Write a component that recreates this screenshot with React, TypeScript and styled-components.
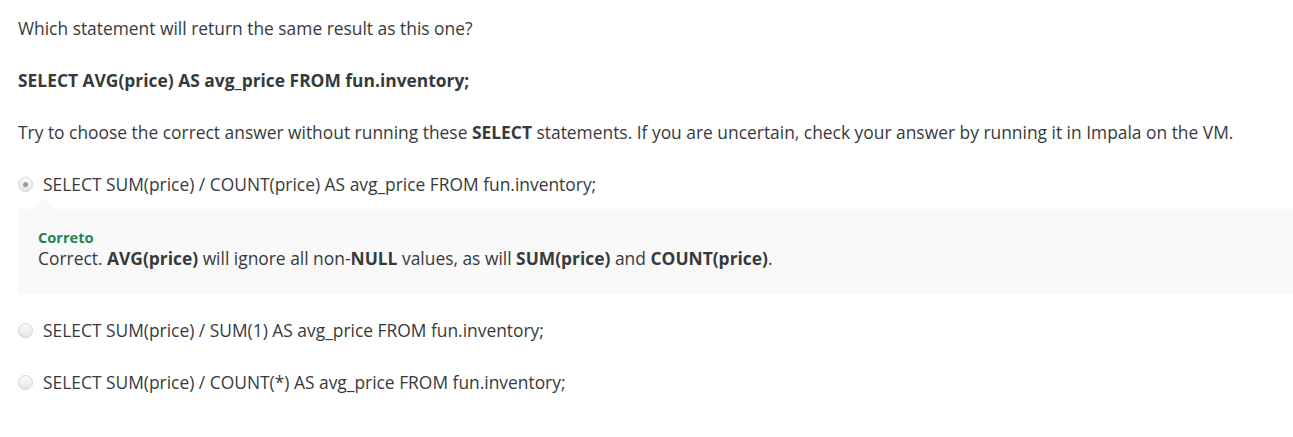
import React from "react";
import styled, { createGlobalStyle } from "styled-components";

const Global = createGlobalStyle`
  html, body { margin: 0; padding: 0; background: #fff; }
  body {
    font-family: "Open Sans", "Liberation Sans", sans-serif;
    font-size: 17.4px;
    line-height: 24px;
    color: #373a3c;
  }
`;

const Page = styled.div`
  padding: 16px 0 0 18px;
`;

const Para = styled.p<{ $bold?: boolean }>`
  margin: 0 0 28px 0;
  font-weight: ${(p) => (p.$bold ? 700 : 400)};
`;

const Options = styled.div`
  display: flex;
  flex-direction: column;
  margin-top: 1px;
`;

const Option = styled.label<{ $gap: number }>`
  display: flex;
  align-items: center;
  gap: 10px;
  height: 24px;
  margin-bottom: ${(p) => p.$gap}px;
`;

const Radio = styled.span<{ $checked?: boolean }>`
  position: relative;
  width: 15px;
  height: 15px;
  border-radius: 50%;
  box-sizing: border-box;
  border: 1px solid #d2d2d2;
  background: linear-gradient(#fcfcfc, #e4e4e4);
  flex: none;
  &::after {
    content: "";
    display: ${(p) => (p.$checked ? "block" : "none")};
    position: absolute;
    left: 4px;
    top: 4px;
    width: 5px;
    height: 5px;
    border-radius: 50%;
    background: #9a9a9a;
  }
`;

const Feedback = styled.div`
  position: relative;
  background: #f9f9f9;
  padding: 18px 20px 25px 20px;
  margin-bottom: 24px;
  &::before {
    content: "";
    position: absolute;
    left: 14px;
    top: -11px;
    border-left: 11px solid transparent;
    border-right: 11px solid transparent;
    border-bottom: 11px solid #f9f9f9;
  }
`;

const Verdict = styled.div`
  color: #1f8354;
  font-weight: 700;
  font-size: 14.6px;
  line-height: 20px;
`;

const Explain = styled.div`
  line-height: 22px;
  b { font-weight: 700; }
`;

export default function App() {
  return (
    <>
      <Global />
      <Page>
        <Para>Which statement will return the same result as this one?</Para>
        <Para $bold>SELECT AVG(price) AS avg_price FROM fun.inventory;</Para>
        <Para>
          Try to choose the correct answer without running these <b>SELECT</b> statements. If you are
          uncertain, check your answer by running it in Impala on the VM.
        </Para>
        <Options>
          <Option $gap={13}>
            <Radio $checked />
            SELECT SUM(price) / COUNT(price) AS avg_price FROM fun.inventory;
          </Option>
          <Feedback>
            <Verdict>Correto</Verdict>
            <Explain>
              Correct. <b>AVG(price)</b> will ignore all non-<b>NULL</b> values, as will{" "}
              <b>SUM(price)</b> and <b>COUNT(price)</b>.
            </Explain>
          </Feedback>
          <Option $gap={28}>
            <Radio />
            SELECT SUM(price) / SUM(1) AS avg_price FROM fun.inventory;
          </Option>
          <Option $gap={28}>
            <Radio />
            SELECT SUM(price) / COUNT(*) AS avg_price FROM fun.inventory;
          </Option>
        </Options>
      </Page>
    </>
  );
}
